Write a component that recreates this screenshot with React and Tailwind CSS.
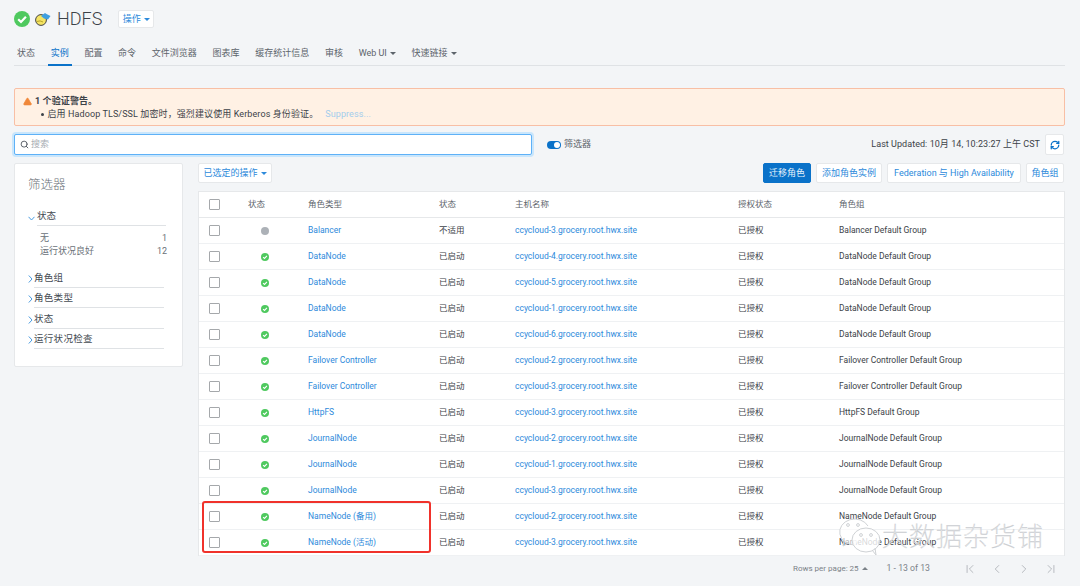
import React from "react";
import { RefreshCw, ChevronRight, ChevronLeft, ChevronFirst, ChevronLast, Search, AlertTriangle } from "lucide-react";

const font = { fontFamily: '"Roboto", "Noto Sans CJK SC", sans-serif' };

const tabs = ["状态", "实例", "配置", "命令", "文件浏览器", "图表库", "缓存统计信息", "审核", "Web UI", "快速链接"];

const rows = [
  ["Balancer", "不适用", "ccycloud-3.grocery.root.hwx.site", "Balancer Default Group", true],
  ["DataNode", "已启动", "ccycloud-4.grocery.root.hwx.site", "DataNode Default Group"],
  ["DataNode", "已启动", "ccycloud-5.grocery.root.hwx.site", "DataNode Default Group"],
  ["DataNode", "已启动", "ccycloud-1.grocery.root.hwx.site", "DataNode Default Group"],
  ["DataNode", "已启动", "ccycloud-6.grocery.root.hwx.site", "DataNode Default Group"],
  ["Failover Controller", "已启动", "ccycloud-2.grocery.root.hwx.site", "Failover Controller Default Group"],
  ["Failover Controller", "已启动", "ccycloud-3.grocery.root.hwx.site", "Failover Controller Default Group"],
  ["HttpFS", "已启动", "ccycloud-3.grocery.root.hwx.site", "HttpFS Default Group"],
  ["JournalNode", "已启动", "ccycloud-2.grocery.root.hwx.site", "JournalNode Default Group"],
  ["JournalNode", "已启动", "ccycloud-1.grocery.root.hwx.site", "JournalNode Default Group"],
  ["JournalNode", "已启动", "ccycloud-3.grocery.root.hwx.site", "JournalNode Default Group"],
  ["NameNode (备用)", "已启动", "ccycloud-2.grocery.root.hwx.site", "NameNode Default Group"],
  ["NameNode (活动)", "已启动", "ccycloud-3.grocery.root.hwx.site", "NameNode Default Group"],
];

const Caret = ({ up }) => (
  <span
    className={
      up
        ? "inline-block ml-[3px] align-middle border-x-[3px] border-x-transparent border-b-[3px] border-b-current"
        : "inline-block ml-[3px] align-middle border-x-[3px] border-x-transparent border-t-[3px] border-t-current"
    }
  />
);

const CheckCircle = ({ size }) => (
  <svg width={size} height={size} viewBox="0 0 16 16" className="shrink-0">
    <circle cx="8" cy="8" r="8" fill="#4fc95f" />
    <path d="M4.2 8.2 L7 11 L11.9 5.8" fill="none" stroke="#fff" strokeWidth="2.2" />
  </svg>
);

const HdfsLogo = () => (
  <svg width="16" height="14" viewBox="0 0 16 14" className="shrink-0">
    <circle cx="6" cy="8" r="5.4" fill="#f5e463" stroke="#444" strokeWidth="1" />
    <path d="M2 9.5 Q5 8 8 10" fill="none" stroke="#b9a52a" strokeWidth="1" />
    <path d="M6 4 L10 1 L11.5 2 L15.5 4 L13 7.5 L9 6.5 Z" fill="#3f9fe0" />
  </svg>
);

const Checkbox = () => (
  <div className="w-[11px] h-[11px] rounded-[1px] border border-[#a5a8ab] bg-white" />
);

const Btn = ({ children, primary, className }) => (
  <button
    className={
      (primary
        ? "bg-[#0a72c9] text-[#e4f1fb] border-[#0a72c9] "
        : "bg-white text-[#2d8adb] border-[#e6e8ea] ") +
      "block h-[20px] rounded-[2px] border text-[9px] leading-none " +
      (className || "")
    }
  >
    {children}
  </button>
);

const FilterHead = ({ label }) => (
  <div className="flex items-end h-[20.5px]">
    <svg width="5" height="8" viewBox="0 0 5 8" fill="none" stroke="#4a9ce0" strokeWidth="1" className="shrink-0 ml-[13px] mr-[1px] mb-[5px]">
      <path d="M0.8 0.5 L4 4 L0.8 7.5" />
    </svg>
    <div className="w-[130px] border-b border-[#dfe2e5] pb-[2px] text-[9.5px] leading-[14px] tracking-[0.3px] text-[#444b52]">
      {label}
    </div>
  </div>
);

const gridCols = "grid grid-cols-[49px_60px_131px_76px_223px_101px_1fr] items-center";

export default function App() {
  return (
    <div style={font} className="relative w-[1080px] h-[586px] overflow-hidden bg-[#f3f5f7] pt-[10px] pl-[14px] pr-[15px] text-[#444b52]">
      {/* Header */}
      <div className="flex items-center h-[18px]">
        <CheckCircle size={16} />
        <div className="ml-[5px]"><HdfsLogo /></div>
        <span className="ml-[6px] text-[18px] leading-none font-light text-[#3c4248]">HDFS</span>
        <Btn className="ml-[16px] w-[36px] !h-[18px]">
          操作<Caret />
        </Btn>
      </div>

      {/* Tabs */}
      <div className="flex mt-[16px] h-[22px] gap-[9.7px] border-b border-[#dfe2e5] text-[9px] text-[#5d646b]">
        {tabs.map((t, i) => (
          <div
            key={t}
            className={
              i === 1
                ? "h-[22px] px-[3px] leading-[18px] text-[#0a72c9] border-b-2 border-[#0a72c9]"
                : "h-[22px] px-[3px] leading-[18px]"
            }
          >
            {t}
            {i > 7 ? <Caret /> : null}
          </div>
        ))}
      </div>

      {/* Alert */}
      <div className="mt-[22px] h-[38px] rounded-[2px] border border-[#f8bfa5] bg-[#fff1e4] pt-[6px] pl-[8px] text-[9px] leading-[13px] tracking-[0.1px] text-[#3c4248]">
        <div className="flex items-center font-bold">
          <AlertTriangle size={9} className="mr-[3px] text-[#f0883a] fill-[#f0883a] stroke-[#f0883a]" />
          1 个验证警告。
        </div>
        <div className="flex items-center ml-[18px]">
          <span className="w-[2.5px] h-[2.5px] rounded-full bg-[#3c4248] mr-[4px]" />
          启用 Hadoop TLS/SSL 加密时，强烈建议使用 Kerberos 身份验证。
          <span className="ml-[7px] text-[#a3cdec]">Suppress...</span>
        </div>
      </div>

      {/* Search row */}
      <div className="flex items-center mt-[8px] h-[21px]">
        <div className="flex items-center w-[518px] h-[21px] rounded-[2px] border border-[#5eb1f7] bg-white pl-[5px] shadow-[0_0_0_2px_#c9e6fc] text-[9px] text-[#a7adb3]">
          <Search size={9} strokeWidth={2.5} className="mr-[2px] text-[#555c63]" />
          搜索
        </div>
        <div className="relative ml-[15px] w-[14px] h-[8px] rounded-full bg-[#0a72c9]">
          <div className="absolute right-[1px] top-[1px] w-[6px] h-[6px] rounded-full bg-white" />
        </div>
        <span className="ml-[3px] text-[9px] text-[#5d646b]">筛选器</span>
        <span className="ml-auto text-[9px] tracking-[0.05px] text-[#3c4248]">Last Updated: 10月 14, 10:23:27 上午 CST</span>
        <button className="ml-[5px] mr-[1px] flex items-center justify-center w-[19px] h-[21px] rounded-[2px] border border-[#e6e8ea] bg-white">
          <RefreshCw size={10} strokeWidth={3} className="text-[#0a72c9]" />
        </button>
      </div>

      {/* Main */}
      <div className="flex mt-[8px]">
        {/* Filter sidebar */}
        <div className="w-[169px] h-[204px] shrink-0 rounded-[2px] border border-[#e6e8ea] bg-white">
          <div className="mt-[13px] ml-[13px] text-[12.5px] leading-[16px] font-light text-[#6a7178]">筛选器</div>
          <div className="flex items-end h-[21px] mt-[12px]">
            <svg width="7" height="5" viewBox="0 0 7 5" fill="none" stroke="#4a9ce0" strokeWidth="1" className="shrink-0 ml-[13px] mr-[2px] mb-[5px]">
              <path d="M0.5 0.8 L3.5 4 L6.5 0.8" />
            </svg>
            <div className="w-[129px] border-b border-[#dfe2e5] pb-[2px] text-[9.5px] leading-[14px] text-[#444b52]">状态</div>
          </div>
          <div className="w-[127px] ml-[25px] mt-[5.5px] text-[9px] leading-[13px] text-[#6a7178]">
            <div className="flex justify-between"><span>无</span><span>1</span></div>
            <div className="flex justify-between"><span>运行状况良好</span><span>12</span></div>
          </div>
          <div className="mt-[9.5px]"><FilterHead label="角色组" /></div>
          <FilterHead label="角色类型" />
          <FilterHead label="状态" />
          <FilterHead label="运行状况检查" />
        </div>

        {/* Role table */}
        <div className="ml-[15px] flex-1 min-w-0">
          <div className="flex justify-between">
            <Btn className="w-[74px]">
              已选定的操作<Caret />
            </Btn>
            <div className="flex gap-[5px] mr-[1px]">
              <Btn primary className="w-[48px]">迁移角色</Btn>
              <Btn className="w-[66px]">添加角色实例</Btn>
              <Btn className="w-[134px]">Federation 与 High Availability</Btn>
              <Btn className="w-[38px]">角色组</Btn>
            </div>
          </div>
          <div className="mt-[8px] border-x border-t border-[#e6e8ea] bg-white text-[8.5px] text-[#3c4248]">
            <div className={gridCols + " h-[26px] border-b border-[#e6e8ea] text-[#5d646b]"}>
              <div className="pl-[10px]"><Checkbox /></div>
              <div>状态</div>
              <div>角色类型</div>
              <div>状态</div>
              <div>主机名称</div>
              <div>授权状态</div>
              <div>角色组</div>
            </div>
            {rows.map((r, i) => (
              <div key={i} className={gridCols + " h-[26px] border-b border-[#eff1f3]"}>
                <div className="pl-[10px]"><Checkbox /></div>
                <div className="pl-[13px]">
                  {r[4] ? <div className="w-[8px] h-[8px] rounded-full bg-[#acb1b7]" /> : <CheckCircle size={8} />}
                </div>
                <div className="text-[#2d8adb]">{r[0]}</div>
                <div>{r[1]}</div>
                <div className="text-[#2d8adb]">{r[2]}</div>
                <div>已授权</div>
                <div>{r[3]}</div>
              </div>
            ))}
          </div>

          {/* Pagination */}
          <div className="flex items-center h-[26px] text-[8px] whitespace-nowrap text-[#7b8288]">
            <span className="ml-[595px]">Rows per page: 25<Caret up /></span>
            <span className="ml-[19px] text-[8.7px]">1 - 13 of 13</span>
            <div className="flex items-center ml-[33px] gap-[13px] text-[#8b9197]">
              <ChevronFirst size={14} strokeWidth={1} />
              <ChevronLeft size={14} strokeWidth={1} />
              <ChevronRight size={14} strokeWidth={1} />
              <ChevronLast size={14} strokeWidth={1} />
            </div>
          </div>
        </div>
      </div>

      {/* Red highlight */}
      <div className="absolute left-[202px] top-[501px] w-[229px] h-[52px] rounded-[3px] border-2 border-[#f0322b]" />

      {/* Watermark */}
      <div className="absolute left-[838px] top-[518px] flex items-center">
        <svg width="43" height="38" viewBox="0 0 43 38" fill="none" stroke="#cfd2d5" strokeWidth="1" className="shrink-0">
          <path d="M17 27 A15 13 0 1 1 30 8" fill="#ffffff99" />
          <path d="M6 23 L5 28 L11 25" />
          <ellipse cx="28" cy="22" rx="14" ry="12" fill="#ffffffcc" />
          <path d="M34 32 L38 37 L37 30" />
          <circle cx="10" cy="7" r="1.4" />
          <circle cx="20" cy="7" r="1.4" />
          <circle cx="23" cy="17" r="1.4" />
          <circle cx="33" cy="17" r="1.4" />
        </svg>
        <span className="ml-[1px] text-[26px] font-thin leading-none tracking-[1px] text-[#ffffffcc]" style={{ WebkitTextStroke: "0.5px #c9ccd0" }}>
          大数据杂货铺
        </span>
      </div>
    </div>
  );
}
